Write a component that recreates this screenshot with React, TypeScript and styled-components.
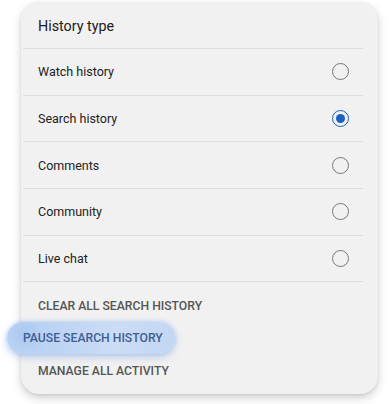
import React from 'react';
import styled, { createGlobalStyle } from 'styled-components';

const GlobalStyle = createGlobalStyle`
    html, body {
        margin: 0;
        padding: 0;
        background: #ffffff;
        font-family: Roboto, "Liberation Sans", Arial, sans-serif;
    }
`;

const Page = styled.div`
    width: 392px;
    height: 404px;
    padding: 2px 0 0 21px;
    box-sizing: border-box;
    overflow: hidden;
`;

const Card = styled.div`
    width: 357px;
    height: 392px;
    box-sizing: border-box;
    background: #f1f1f1;
    border-radius: 18px;
    box-shadow: 0 4px 10px rgba(0, 0, 0, 0.18), 0 1px 3px rgba(0, 0, 0, 0.08);
    display: flex;
    flex-direction: column;
`;

const Header = styled.div`
    height: 46px;
    box-sizing: border-box;
    padding: 2px 0 0 17px;
    display: flex;
    align-items: center;
    font-size: 14.3px;
    color: #202020;
`;

const Divider = styled.div`
    height: 1px;
    margin: 0 15px 0 2px;
    background: #dedede;
`;

const Row = styled.div`
    height: 45.7px;
    display: flex;
    align-items: center;
    justify-content: space-between;
    padding: 0 29px 0 17px;
    font-size: 12.5px;
    color: #222222;
`;

const Radio = styled.span<{ $checked?: boolean }>`
    width: 17px;
    height: 17px;
    box-sizing: border-box;
    border-radius: 50%;
    border: 1.6px solid ${({ $checked }) => ($checked ? '#1c5fc2' : '#777777')};
    display: flex;
    align-items: center;
    justify-content: center;

    &::after {
        content: '';
        display: ${({ $checked }) => ($checked ? 'block' : 'none')};
        width: 9px;
        height: 9px;
        border-radius: 50%;
        background: #1c5fc2;
    }
`;

const Actions = styled.div`
    display: flex;
    flex-direction: column;
    padding-top: 7px;
`;

const Action = styled.div<{ $pressed?: boolean }>`
    height: 32.5px;
    display: flex;
    align-items: center;
    align-self: flex-start;
    padding-left: ${({ $pressed }) => ($pressed ? '16px' : '17px')};
    padding-right: ${({ $pressed }) => ($pressed ? '12px' : '0')};
    margin-left: ${({ $pressed }) => ($pressed ? '-14px' : '0')};
    font-size: 12.2px;
    font-weight: 500;
    color: ${({ $pressed }) => ($pressed ? '#3f5f92' : '#555555')};
    border-radius: 16px;
    background: ${({ $pressed }) =>
        $pressed
            ? 'radial-gradient(circle at 18px 12px, #a9c7f1 0, #b9d2f4 18px, #cbdcf5 60%, #c2d7f4 100%)'
            : 'transparent'};
    box-shadow: ${({ $pressed }) =>
        $pressed ? '0 3px 8px rgba(90, 140, 220, 0.35), 0 0 4px rgba(120, 160, 230, 0.4)' : 'none'};
`;

const types = ['Watch history', 'Search history', 'Comments', 'Community', 'Live chat'];

export default function App() {
    return (
        <Page>
            <GlobalStyle />
            <Card>
                <Header>History type</Header>
                {types.map((t) => (
                    <React.Fragment key={t}>
                        <Divider />
                        <Row>
                            {t}
                            <Radio $checked={t === 'Search history'} />
                        </Row>
                    </React.Fragment>
                ))}
                <Divider />
                <Actions>
                    <Action>CLEAR ALL SEARCH HISTORY</Action>
                    <Action $pressed>PAUSE SEARCH HISTORY</Action>
                    <Action>MANAGE ALL ACTIVITY</Action>
                </Actions>
            </Card>
        </Page>
    );
}
